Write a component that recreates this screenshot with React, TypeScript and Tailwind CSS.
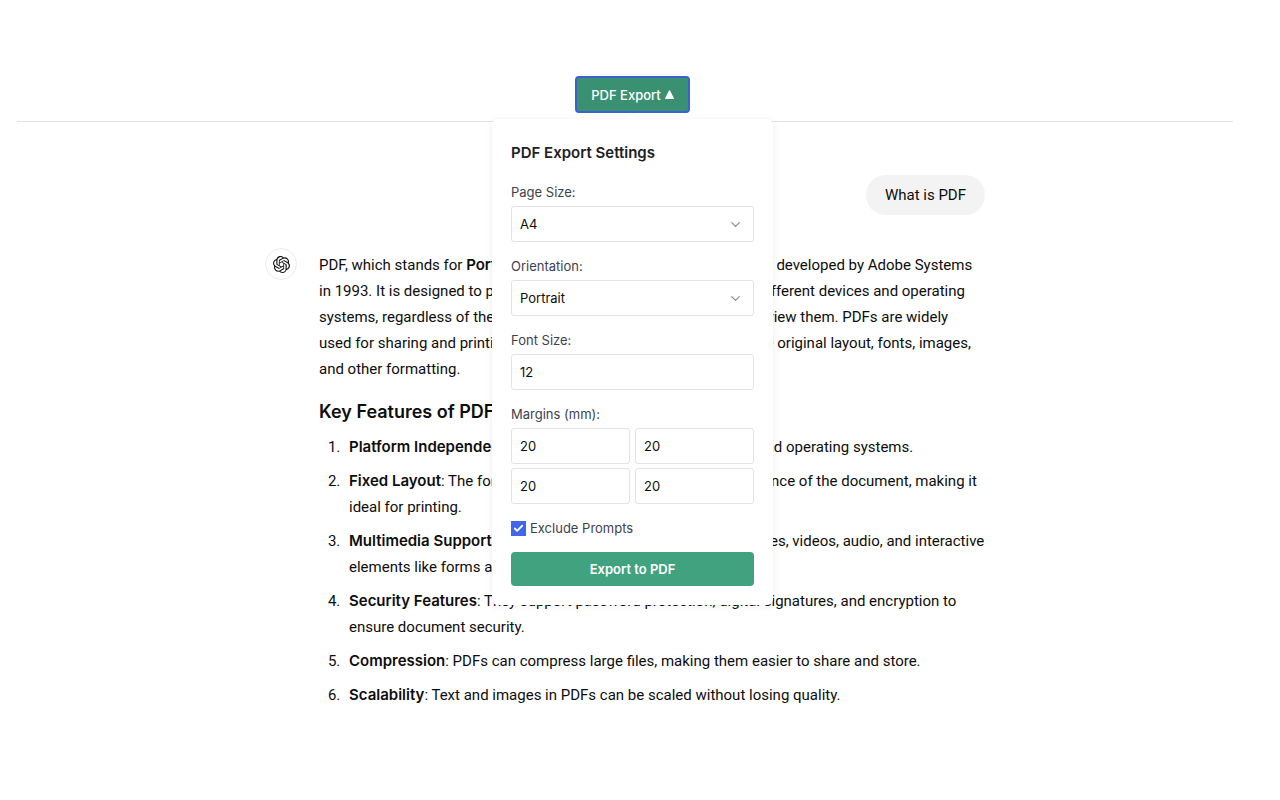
import React, { useState } from 'react';
import { Check, ChevronDown } from 'lucide-react';
import { SiOpenai } from 'react-icons/si';

const Bold: React.FC<{ children: React.ReactNode }> = ({ children }) => (
  <b className="font-['Inter','Liberation_Sans',sans-serif] font-semibold">{children}</b>
);

const introLines: React.ReactNode[] = [
  <>PDF, which stands for <Bold>Portable Document Format</Bold>, is a data format developed by Adobe Systems</>,
  'in 1993. It is designed to preserve documents consistently across different devices and operating',
  'systems, regardless of the hardware, software, and system used to view them. PDFs are widely',
  'used for sharing and printing documents because they help keep the original layout, fonts, images,',
  'and other formatting.',
];

const features = [
  {
    name: 'Platform Independence',
    lines: [': PDFs can be viewed on any device and operating systems.'],
  },
  {
    name: 'Fixed Layout',
    lines: [': The format preserves the layout and the appearance of the document, making it', 'ideal for printing.'],
  },
  {
    name: 'Multimedia Support',
    lines: [': PDFs can contain text, tables, links, images, videos, audio, and interactive', 'elements like forms and buttons.'],
  },
  {
    name: 'Security Features',
    lines: [': They support password protection, digital signatures, and encryption to', 'ensure document security.'],
  },
  {
    name: 'Compression',
    lines: [': PDFs can compress large files, making them easier to share and store.'],
  },
  {
    name: 'Scalability',
    lines: [': Text and images in PDFs can be scaled without losing quality.'],
  },
];

const fieldClass =
  'block h-9 w-full rounded-[3px] border border-[#e3e3e3] bg-white px-2 text-[13px] text-[#0d0d0d] focus:outline-none focus:border-blue-500';

interface SelectFieldProps {
  id: string;
  label: string;
  value: string;
  options: string[];
  onChange: (value: string) => void;
}

const SelectField: React.FC<SelectFieldProps> = ({ id, label, value, options, onChange }) => (
  <div className="flex flex-col gap-1">
    <label htmlFor={id}>{label}</label>
    <div className="relative">
      <select
        id={id}
        value={value}
        onChange={(e) => onChange(e.target.value)}
        className={`${fieldClass} appearance-none`}
      >
        {options.map((option) => (
          <option key={option}>{option}</option>
        ))}
      </select>
      <ChevronDown
        size={15}
        strokeWidth={2}
        className="pointer-events-none absolute right-[11px] top-[11px] text-[#8e8e93]"
      />
    </div>
  </div>
);

const ExportSettings: React.FC = () => {
  const [pageSize, setPageSize] = useState('A4');
  const [orientation, setOrientation] = useState('Portrait');
  const [fontSize, setFontSize] = useState('12');
  const [margins, setMargins] = useState({ Top: '20', Right: '20', Bottom: '20', Left: '20' });
  const [excludePrompts, setExcludePrompts] = useState(true);

  return (
    <div className="absolute -left-[83px] top-[43px] z-10 w-[281px] rounded-md bg-white shadow-[0_1px_7px_rgba(0,0,0,0.08)]">
      {/* pointer up to the button */}
      <div className="absolute left-1/2 -top-1 size-2 -translate-x-1/2 rotate-45 bg-white" />
      <form
        onSubmit={(e) => e.preventDefault()}
        className="relative flex flex-col gap-[14px] p-[19px] text-[13px] leading-5 text-[#40414f]"
      >
        <h2 className="text-[15px] font-semibold leading-[30px] text-[#202123]">PDF Export Settings</h2>
        <SelectField
          id="page-size"
          label="Page Size:"
          value={pageSize}
          options={['A4', 'Letter', 'Legal']}
          onChange={setPageSize}
        />
        <SelectField
          id="orientation"
          label="Orientation:"
          value={orientation}
          options={['Portrait', 'Landscape']}
          onChange={setOrientation}
        />
        <div className="flex flex-col gap-1">
          <label htmlFor="font-size">Font Size:</label>
          <input
            id="font-size"
            inputMode="numeric"
            value={fontSize}
            onChange={(e) => setFontSize(e.target.value)}
            className={fieldClass}
          />
        </div>
        <fieldset>
          <legend className="mb-1">Margins (mm):</legend>
          <div className="grid grid-cols-2 gap-x-[5px] gap-y-1">
            {(Object.keys(margins) as (keyof typeof margins)[]).map((side) => (
              <input
                key={side}
                aria-label={`${side} margin`}
                inputMode="numeric"
                value={margins[side]}
                onChange={(e) => setMargins({ ...margins, [side]: e.target.value })}
                className={fieldClass}
              />
            ))}
          </div>
        </fieldset>
        <label className="flex items-center gap-1">
          <span className="relative size-[15px]">
            <input
              type="checkbox"
              checked={excludePrompts}
              onChange={(e) => setExcludePrompts(e.target.checked)}
              className="block size-[15px] appearance-none border border-[#8e8e93] checked:border-[#4165eb] checked:bg-[#4165eb]"
            />
            {excludePrompts && (
              <Check size={11} strokeWidth={4} className="pointer-events-none absolute left-0.5 top-0.5 text-white" />
            )}
          </span>
          Exclude Prompts
        </label>
        <button type="submit" className="h-[34px] rounded-[4px] bg-[#40a27f] font-semibold text-white">
          Export to PDF
        </button>
      </form>
    </div>
  );
};

export default function App() {
  const [open, setOpen] = useState(true);

  return (
    <div className="min-h-screen bg-white pl-[17px] pr-[47px] font-['Inter','Liberation_Sans',sans-serif] text-[15px] leading-[26px] text-[#0d0d0d]">
      <header className="flex justify-center border-b border-[#e3e3e3] pb-2 pl-[15px] pt-[76px]">
        <div className="relative">
          <button
            type="button"
            aria-expanded={open}
            onClick={() => setOpen(!open)}
            className="flex h-[37px] w-[115px] items-center justify-center gap-1 rounded-[4px] border-2 border-[#3b63cf] bg-[#3a9171] text-[13px] font-medium text-white"
          >
            PDF Export
            <svg width="9" height="9" viewBox="0 0 9 9" fill="currentColor" aria-hidden="true">
              <path d="M4 .6a.6.6 0 0 1 1 0L8.8 8a.6.6 0 0 1-.5.9H.7A.6.6 0 0 1 .2 8z" />
            </svg>
          </button>
          {open && <ExportSettings />}
        </div>
      </header>

      <main className="mx-auto max-w-[720px] pt-[53px] font-['Roboto','Inter',sans-serif]">
        <div className="flex justify-end">
          <p className="rounded-full bg-[#f3f3f3] px-[19px] py-[7px]">What is PDF</p>
        </div>

        <article className="mt-[33px] flex gap-[22px]">
          <div className="flex size-8 shrink-0 items-center justify-center rounded-full border border-[#ececec]">
            <SiOpenai size={17} />
          </div>
          <div className="min-w-0 flex-1 pt-1">
            <p className="whitespace-nowrap">
              {introLines.map((line, i) => (
                <span key={i} className="block">
                  {line}
                </span>
              ))}
            </p>
            <h3 className="mt-4 font-['Inter','Liberation_Sans',sans-serif] text-lg font-semibold leading-7">
              Key Features of PDF
            </h3>
            <ol className="mt-2 flex list-decimal flex-col gap-2 whitespace-nowrap pl-[25px]">
              {features.map((feature) => (
                <li key={feature.name} className="pl-[5px]">
                  <Bold>{feature.name}</Bold>
                  {feature.lines.map((line, i) => (
                    <React.Fragment key={line}>
                      {i > 0 && <br />}
                      {line}
                    </React.Fragment>
                  ))}
                </li>
              ))}
            </ol>
          </div>
        </article>
      </main>
    </div>
  );
}
